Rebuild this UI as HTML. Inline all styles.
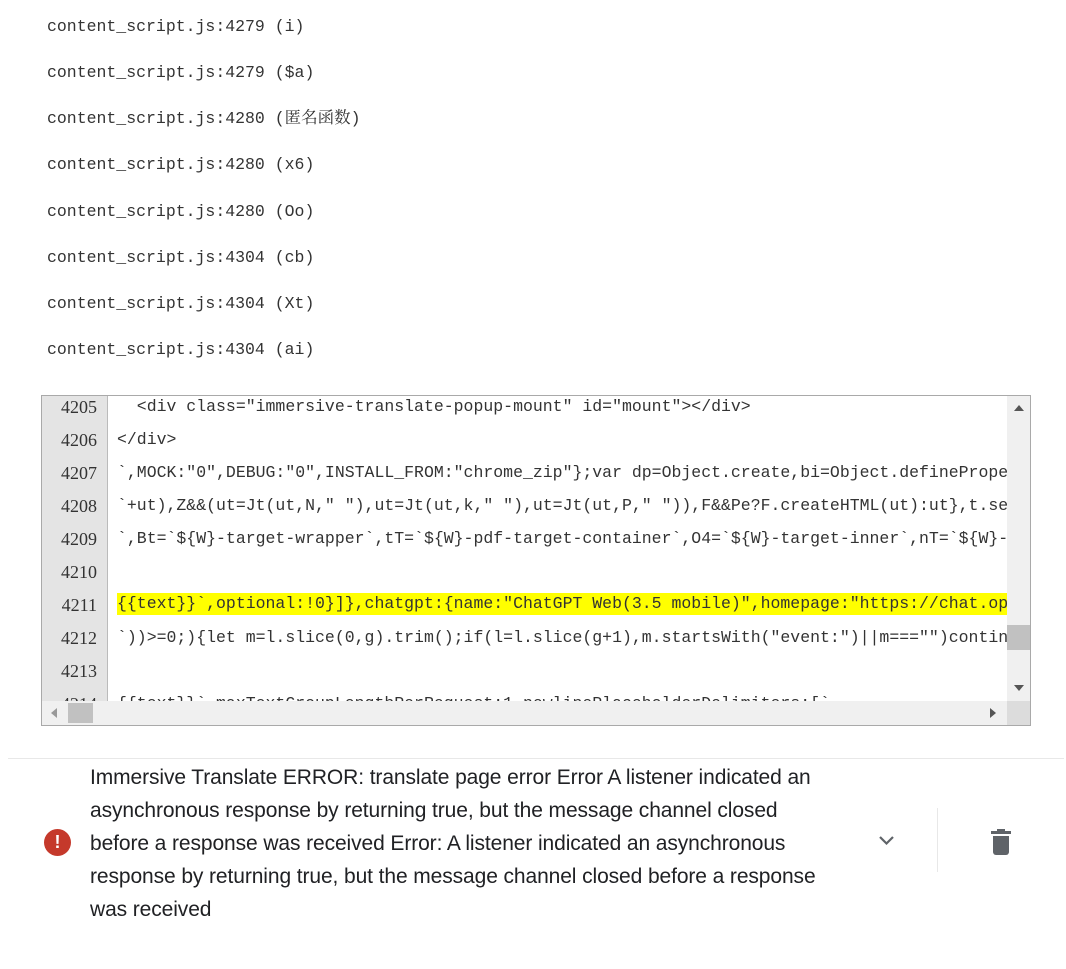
<!DOCTYPE html>
<html><head><meta charset="utf-8"><style>
body{margin:0;width:1066px;height:969px;background:#fff;position:relative;overflow:hidden;font-family:"Liberation Mono","Noto Serif CJK SC",monospace;color:#333}
.t{position:absolute;left:47px;font-size:16.5px;line-height:20px;white-space:pre}
.box{position:absolute;left:41px;top:395px;width:988px;height:329px;border:1px solid #a9a9a9;overflow:hidden;background:#fff}
.gut{position:absolute;left:0;top:0;width:65px;height:305px;background:#e4e4e4;border-right:1px solid #bbb}
.ln{position:absolute;left:0;width:55px;text-align:right;font-size:18px;line-height:22px;color:#333;font-family:"Liberation Serif",serif}
.cl{position:absolute;left:75px;font-size:16.5px;line-height:22px;white-space:pre;width:890px;overflow:hidden}
.vs{position:absolute;left:965px;top:0;width:23px;height:305px;background:#f0f0f0}
.hs{position:absolute;left:0;top:305px;width:965px;height:24px;background:#f0f0f0}
.cr{position:absolute;left:965px;top:305px;width:23px;height:24px;background:#dcdcdc}
.msg{position:absolute;left:90px;top:761px;font-family:"Liberation Sans",sans-serif;font-size:21px;line-height:33px;color:#202124;white-space:pre;letter-spacing:-0.1px}
</style></head><body>
<div class="t" style="top:17px">content_script.js:4279 (i)</div>
<div class="t" style="top:63px">content_script.js:4279 ($a)</div>
<div class="t" style="top:109px">content_script.js:4280 (匿名函数)</div>
<div class="t" style="top:155px">content_script.js:4280 (x6)</div>
<div class="t" style="top:202px">content_script.js:4280 (Oo)</div>
<div class="t" style="top:248px">content_script.js:4304 (cb)</div>
<div class="t" style="top:294px">content_script.js:4304 (Xt)</div>
<div class="t" style="top:340px">content_script.js:4304 (ai)</div>

<div class="box">
<div class="gut">
<div class="ln" style="top:0">4205</div>
<div class="ln" style="top:33px">4206</div>
<div class="ln" style="top:66px">4207</div>
<div class="ln" style="top:99px">4208</div>
<div class="ln" style="top:132px">4209</div>
<div class="ln" style="top:165px">4210</div>
<div class="ln" style="top:198px">4211</div>
<div class="ln" style="top:231px">4212</div>
<div class="ln" style="top:264px">4213</div>
<div class="ln" style="top:297px">4214</div>
</div>
<div class="cl" style="top:0">  &lt;div class="immersive-translate-popup-mount" id="mount"&gt;&lt;/div&gt;</div>
<div class="cl" style="top:33px">&lt;/div&gt;</div>
<div class="cl" style="top:66px">`,MOCK:"0",DEBUG:"0",INSTALL_FROM:"chrome_zip"};var dp=Object.create,bi=Object.definePrope</div>
<div class="cl" style="top:99px">`+ut),Z&amp;&amp;(ut=Jt(ut,N," "),ut=Jt(ut,k," "),ut=Jt(ut,P," ")),F&amp;&amp;Pe?F.createHTML(ut):ut},t.se</div>
<div class="cl" style="top:132px">`,Bt=`${W}-target-wrapper`,tT=`${W}-pdf-target-container`,O4=`${W}-target-inner`,nT=`${W}-</div>
<div class="cl" style="top:197px;background:#ffff00">{{text}}`,optional:!0}]},chatgpt:{name:"ChatGPT Web(3.5 mobile)",homepage:"https://chat.op</div>
<div class="cl" style="top:231px">`))&gt;=0;){let m=l.slice(0,g).trim();if(l=l.slice(g+1),m.startsWith("event:")||m==="")contin</div>
<div class="cl" style="top:297px">{{text}}`,maxTextGroupLengthPerRequest:1,newlinePlaceholderDelimiters:[`</div>
<div class="vs"><div style="position:absolute;left:7px;top:9px;border:5px solid transparent;border-bottom:6px solid #555;border-top:0"></div>
<div style="position:absolute;left:0;top:229px;width:23px;height:25px;background:#c1c1c1"></div>
<div style="position:absolute;left:7px;top:289px;border:5px solid transparent;border-top:6px solid #555;border-bottom:0"></div></div>
<div class="hs"><div style="position:absolute;left:9px;top:7px;border:5px solid transparent;border-right:6px solid #999;border-left:0"></div>
<div style="position:absolute;left:26px;top:2px;width:25px;height:20px;background:#c1c1c1"></div>
<div style="position:absolute;left:948px;top:7px;border:5px solid transparent;border-left:6px solid #555;border-right:0"></div></div>
<div class="cr"></div>
</div>

<div style="position:absolute;left:8px;top:758px;width:1056px;height:1px;background:#e8e8e8"></div>
<div style="position:absolute;left:44px;top:829px;width:27px;height:27px;border-radius:50%;background:#c5392b;color:#fff;font:bold 18px/27px 'Liberation Sans',sans-serif;text-align:center">!</div>
<div class="msg">Immersive Translate ERROR: translate page error Error A listener indicated an
asynchronous response by returning true, but the message channel closed
before a response was received Error: A listener indicated an asynchronous
response by returning true, but the message channel closed before a response
was received</div>
<svg style="position:absolute;left:878px;top:835px" width="17" height="12" viewBox="0 0 17 12"><path d="M2 2 L8.5 8.5 L15 2" fill="none" stroke="#5f6368" stroke-width="2.2"/></svg>
<div style="position:absolute;left:937px;top:808px;width:1px;height:64px;background:#e8e8e8"></div>
<svg style="position:absolute;left:990px;top:828px" width="22" height="28" viewBox="0 0 22 28"><path d="M7 1h8v2h6v3H1V3h6z" fill="#5f6368"/><path d="M3 8h16v16a3 3 0 0 1-3 3H6a3 3 0 0 1-3-3z" fill="#5f6368"/></svg>
</body></html>
